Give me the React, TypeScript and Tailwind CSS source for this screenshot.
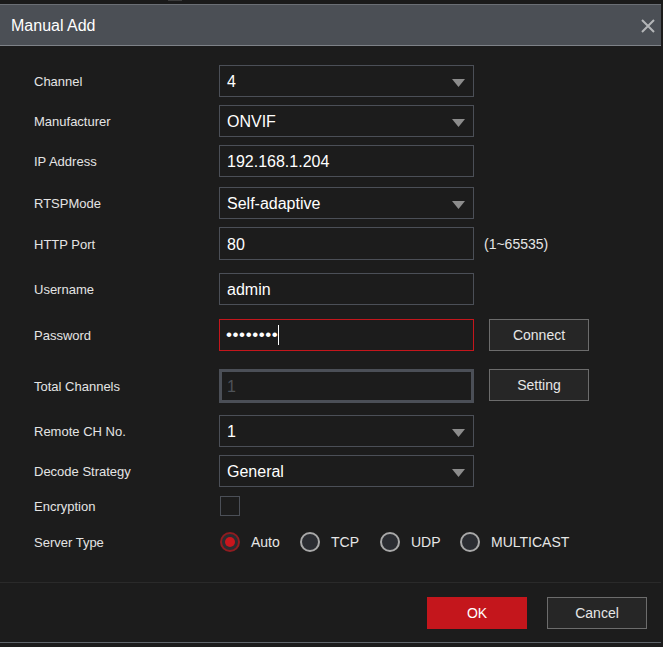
import React from "react";

const font = { fontFamily: '"Liberation Sans", Arial, sans-serif' };

function Arrow() {
  return (
    <svg width="13" height="8" viewBox="0 0 13 8" className="absolute right-[8px] top-[13px]">
      <polygon points="0,0 13,0 6.5,8" fill="#8c8c8c" />
    </svg>
  );
}

function Label({ children }: { children: React.ReactNode }) {
  return <div className="w-[185px] shrink-0 pt-[2px] text-[13px] leading-[16px] text-[#e4e4e4]">{children}</div>;
}

function Select({ value, h = "h-[32px]" }: { value: string; h?: string }) {
  return (
    <div className={`relative flex ${h} w-[255px] shrink-0 items-center border border-[#4b4f57] bg-[#1c1c1c] pl-[7px] pt-[2px] text-[16px] text-white`}>
      {value}
      <Arrow />
    </div>
  );
}

function Input({ value, h = "h-[32px]" }: { value: string; h?: string }) {
  return (
    <div className={`flex ${h} w-[255px] shrink-0 items-center border border-[#4b4f57] bg-[#1c1c1c] pl-[7px] pt-[2px] text-[16px] text-white`}>
      {value}
    </div>
  );
}

function Btn({ children }: { children: React.ReactNode }) {
  return (
    <div className="ml-[15px] flex h-[32px] w-[100px] shrink-0 items-center justify-center border border-[#6c6c6c] bg-[#262626] pt-[1px] text-[14px] text-[#e6e6e6]">
      {children}
    </div>
  );
}

function Radio({ label, checked }: { label: string; checked?: boolean }) {
  return (
    <div className="flex w-[80px] shrink-0 items-center">
      {checked ? (
        <div className="flex h-[20px] w-[20px] shrink-0 items-center justify-center rounded-full border-2 border-[#8e1c20] bg-[#2a2c30]">
          <div className="h-[10px] w-[10px] rounded-full bg-[#c8161d]" />
        </div>
      ) : (
        <div className="h-[20px] w-[20px] shrink-0 rounded-full border-2 border-[#a8a8a8] bg-[#2b2d32]" />
      )}
      <span className="ml-[11px] whitespace-nowrap pt-[1px] text-[14px] leading-[17px] text-[#e6e6e6]">{label}</span>
    </div>
  );
}

export default function App() {
  return (
    <div className="h-[647px] w-[663px] overflow-hidden bg-[#1c1c1c]" style={font}>
      <div className="relative h-[4px] bg-[#1a1a1a]">
        <div className="absolute left-[168px] top-0 h-[1px] w-[14px] bg-[#3c3c3c]" />
      </div>
      <div className="w-[661px]">
        <div className="flex h-[42px] items-center justify-between border-y border-t-[#6a6e74] border-b-[#7e8288] bg-[#4b4f55] pl-[11px] pr-[6px]">
          <span className="pt-[1px] text-[16px] text-white">Manual Add</span>
          <svg width="14" height="14" viewBox="0 0 14 14" className="mt-[2px]">
            <path d="M1 1 L13 13 M13 1 L1 13" stroke="#b4b6b8" strokeWidth="2" />
          </svg>
        </div>
        <div className="flex flex-col pl-[34px]">
          <div className="mt-[19px] flex items-center">
            <Label>Channel</Label>
            <Select value="4" />
          </div>
          <div className="mt-[8px] flex items-center">
            <Label>Manufacturer</Label>
            <Select value="ONVIF" />
          </div>
          <div className="mt-[8px] flex items-center">
            <Label>IP Address</Label>
            <Input value="192.168.1.204" />
          </div>
          <div className="mt-[10px] flex items-center">
            <Label>RTSPMode</Label>
            <Select value="Self-adaptive" />
          </div>
          <div className="mt-[8px] flex items-center">
            <Label>HTTP Port</Label>
            <Input value="80" h="h-[33px]" />
            <span className="ml-[10px] pt-[2px] text-[14px] text-[#e6e6e6]">(1~65535)</span>
          </div>
          <div className="mt-[13px] flex items-center">
            <Label>Username</Label>
            <Input value="admin" />
          </div>
          <div className="mt-[14px] flex items-center">
            <Label>Password</Label>
            <div className="flex h-[32px] w-[255px] shrink-0 items-center border border-[#c4161c] bg-[#1c1c1c] pl-[6px] text-white">
              <span className="text-[17px] tracking-[0.6px]">••••••••</span>
              <span className="h-[20px] w-[1px] bg-white" />
            </div>
            <Btn>Connect</Btn>
          </div>
          <div className="mt-[18px] flex items-center">
            <Label>Total Channels</Label>
            <div className="flex h-[34px] w-[255px] shrink-0 items-center border-[3px] border-[#4b4f57] bg-[#1c1c1c] pl-[5px] pt-[2px] text-[16px] text-[#4e5258]">
              1
            </div>
            <div className="self-start">
              <Btn>Setting</Btn>
            </div>
          </div>
          <div className="mt-[12px] flex items-center">
            <Label>Remote CH No.</Label>
            <Select value="1" />
          </div>
          <div className="mt-[8px] flex items-center">
            <Label>Decode Strategy</Label>
            <Select value="General" />
          </div>
          <div className="mt-[9px] flex h-[20px] items-center">
            <Label>Encryption</Label>
            <div className="ml-[1px] h-[20px] w-[20px] shrink-0 border border-[#4b4f57]" />
          </div>
          <div className="mt-[16px] flex h-[20px] items-center">
            <Label>Server Type</Label>
            <div className="ml-[1px] flex items-center">
              <Radio label="Auto" checked />
              <Radio label="TCP" />
              <Radio label="UDP" />
              <Radio label="MULTICAST" />
            </div>
          </div>
        </div>
        <div className="mt-[30px] border-t border-[#2a2a2a]" />
        <div className="flex justify-end gap-[20px] pr-[14px] pt-[14px]">
          <div className="flex h-[32px] w-[100px] items-center justify-center bg-[#c4161c] pt-[1px] text-[14px] text-white">OK</div>
          <div className="flex h-[32px] w-[100px] items-center justify-center border border-[#6c6c6c] bg-[#262626] pt-[1px] text-[14px] text-[#e6e6e6]">
            Cancel
          </div>
        </div>
        <div className="mt-[13px] border-t border-[#5f656b]" />
      </div>
    </div>
  );
}
